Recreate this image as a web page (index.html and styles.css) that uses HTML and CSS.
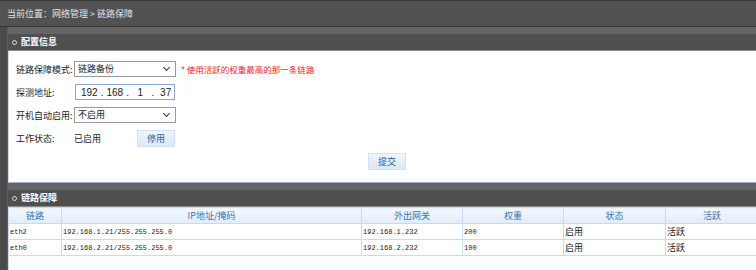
FILE: index.html
```html
<!DOCTYPE html>
<html lang="zh-CN">
<head>
    <meta charset="UTF-8">
    <title>链路保障</title>
    <link rel="stylesheet" href="styles.css">
</head>
<body>
<div class="topbar">当前位置：网络管理 &gt; 链路保障</div>
<div class="main">
    <div class="panel">
        <div class="panel-head"><span class="dot"></span>配置信息</div>
        <div class="panel-body">
            <div class="form-row">
                <span class="label">链路保障模式:</span>
                <div class="select wide">链路备份<span class="arrow"></span></div>
                <span class="hint">* 使用活跃的权重最高的那一条链路</span>
            </div>
            <div class="form-row">
                <span class="label">探测地址:</span>
                <div class="ip-input">
                    <span>192</span><i>.</i><span>168</span><i>.</i><span>1</span><i>.</i><span>37</span>
                </div>
            </div>
            <div class="form-row">
                <span class="label">开机自动启用:</span>
                <div class="select wide">不启用<span class="arrow"></span></div>
            </div>
            <div class="form-row status-row">
                <span class="label">工作状态:</span>
                <span class="status">已启用</span>
                <button class="btn">停用</button>
            </div>
            <div class="submit-row">
                <button class="btn">提交</button>
            </div>
        </div>
    </div>
    <div class="panel panel-list">
        <div class="panel-head"><span class="dot"></span>链路保障</div>
        <table class="grid">
            <thead>
            <tr>
                <th class="c1">链路</th>
                <th class="c2">IP地址/掩码</th>
                <th class="c3">外出网关</th>
                <th class="c4">权重</th>
                <th class="c5">状态</th>
                <th class="c6">活跃</th>
            </tr>
            </thead>
            <tbody>
            <tr>
                <td class="mono">eth2</td>
                <td class="mono">192.168.1.21/255.255.255.0</td>
                <td class="mono">192.168.1.232</td>
                <td class="mono">200</td>
                <td>启用</td>
                <td>活跃</td>
            </tr>
            <tr>
                <td class="mono">eth0</td>
                <td class="mono">192.168.2.21/255.255.255.0</td>
                <td class="mono">192.168.2.232</td>
                <td class="mono">100</td>
                <td>启用</td>
                <td>活跃</td>
            </tr>
            </tbody>
        </table>
    </div>
</div>
</body>
</html>
```

FILE: styles.css
```css
body {
    margin: 0;
    background: #4e4e4e;
    font-family: "Noto Sans CJK SC", "Noto Sans", sans-serif;
    font-size: 9px;
    color: #222;
    overflow: hidden;
}

.topbar {
    height: 25px;
    line-height: 25px;
    padding-left: 7px;
    background: #525252;
    border-top: 1px solid #3c3c3c;
    border-bottom: 1px solid #333;
    color: #e0e0e0;
}

.main {
    padding-left: 8px;
    background: linear-gradient(to right, #4a4a4a 7px, #5e5e5e 7px, #5e5e5e 8px, #4a4a4a 8px);
}

.panel {
    padding-top: 7px;
    background: #656565;
}

.panel-head {
    height: 16px;
    line-height: 16px;
    padding-left: 4px;
    background: #4f4f4f;
    border-bottom: 1px solid #8a8a8a;
    color: #fff;
    font-weight: bold;
    display: flex;
    align-items: center;
}

.dot {
    width: 3px;
    height: 3px;
    border: 1px solid #ddd;
    border-radius: 50%;
    margin-right: 4px;
}

.panel-body {
    background: #fff;
    border-left: 1px solid #cfd9e6;
    border-bottom: 1px solid #9fb0c8;
    padding: 10px 0 10px 7px;
    height: 111px;
}

.form-row {
    display: flex;
    align-items: center;
    height: 16px;
    margin-bottom: 7px;
}

.label {
    width: 58px;
}

.select {
    position: relative;
    box-sizing: border-box;
    height: 16px;
    line-height: 14px;
    border: 1px solid #9a9a9a;
    padding-left: 3px;
    background: #fff;
}

.select.wide {
    width: 102px;
}

.arrow {
    position: absolute;
    right: 6px;
    top: 3px;
    width: 4px;
    height: 4px;
    border-right: 1px solid #333;
    border-bottom: 1px solid #333;
    transform: rotate(45deg);
}

.hint {
    margin-left: 5px;
    color: #f21d1d;
    font-size: 8.5px;
}

.ip-input {
    box-sizing: border-box;
    width: 100px;
    height: 16px;
    margin-left: 1px;
    border: 1px solid #86a8d0;
    display: flex;
    align-items: center;
    padding-left: 5px;
    font-family: "Liberation Sans", sans-serif;
    font-size: 10px;
}

.ip-input span {
    width: 17px;
    text-align: center;
}

.ip-input i {
    font-style: normal;
    width: 9px;
    text-align: center;
}

.status-row {
    margin-top: 1px;
}

.status {
    width: 63px;
}

.btn {
    box-sizing: border-box;
    width: 38px;
    height: 17px;
    padding: 0;
    border: 1px solid #d3e2f2;
    background: linear-gradient(#eef5fd, #dbe8f7);
    color: #2b5e96;
    font-family: inherit;
    font-size: 9px;
}

.submit-row {
    display: flex;
    justify-content: center;
    margin-top: 5px;
    width: 742px;
}

.grid {
    width: 748px;
    border-collapse: collapse;
    background: #fff;
    table-layout: fixed;
}

.grid th, .grid td {
    border: 1px solid #c9daee;
    height: 15px;
    padding: 0 1px;
    white-space: nowrap;
    overflow: hidden;
}

.grid th {
    background: linear-gradient(#f2f7fd, #e2edf9);
    color: #3a74b2;
    font-weight: normal;
}

.grid td {
    color: #1a1a1a;
}

.mono {
    font-family: "Liberation Mono", monospace;
    font-size: 7px;
}

.c1 { width: 50px; }
.c2 { width: 297px; }
.c3 { width: 98px; }
.c4 { width: 98px; }
.c5 { width: 99px; }
.c6 { width: 90px; }

.panel-list::after {
    content: "";
    display: block;
    height: 20px;
    background: #fcfdff;
    border-left: 1px solid #cfd9e6;
}
```
